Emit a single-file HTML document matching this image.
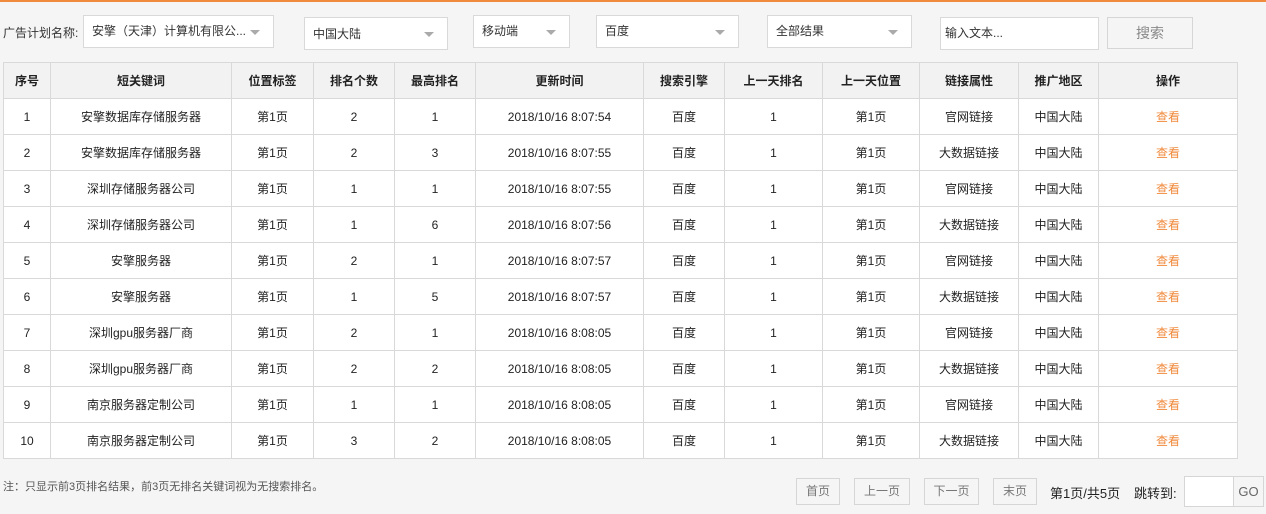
<!DOCTYPE html>
<html><head><meta charset="utf-8">
<style>
*{margin:0;padding:0;box-sizing:border-box}
body{width:1266px;height:514px;background:#f5f5f5;font-family:"Liberation Sans","Noto Sans CJK SC",sans-serif;font-size:12px;color:#222;position:relative;overflow:hidden}
.top{position:absolute;left:0;top:0;width:1266px;height:2px;background:#f08a3c}
.abs{position:absolute}
.sel{position:absolute;background:#fff;border:1px solid #d9d9d9;height:33px;line-height:31px;padding-left:8px;color:#333}
.sel.a:after{content:"";position:absolute;right:13px;top:14px;border-left:5px solid transparent;border-right:5px solid transparent;border-top:5px solid #aaa}
table{position:absolute;left:3px;top:62px;border-collapse:collapse;background:#fff;table-layout:fixed}
td,th{border:1px solid #d9d9d9;text-align:center;height:36px;font-size:12px;font-weight:normal;color:#222}
th{background:#f2f2f2;font-weight:bold}
td.o{color:#f08a3c}
.btn{position:absolute;top:478px;height:27px;line-height:25px;border:1px solid #d6d6d6;background:#f5f5f5;color:#777;text-align:center}
</style></head><body>
<div class="top"></div>
<div class="abs" style="left:3px;top:25px;line-height:16px;color:#333">广告计划名称:</div>
<div class="sel a" style="left:83px;top:15px;width:191px;">安擎（天津）计算机有限公...</div>
<div class="sel a" style="left:304px;top:17px;width:144px;line-height:33px">中国大陆</div>
<div class="sel a" style="left:473px;top:15px;width:97px">移动端</div>
<div class="sel a" style="left:596px;top:15px;width:143px">百度</div>
<div class="sel a" style="left:767px;top:15px;width:145px">全部结果</div>
<div class="sel" style="left:940px;top:17px;width:159px;padding-left:4px">输入文本...</div>
<div class="abs" style="left:1107px;top:17px;width:86px;height:32px;line-height:30px;border:1px solid #d6d6d6;text-align:center;color:#888;font-size:14px">搜索</div>
<table>
<colgroup><col style="width:47px"><col style="width:181px"><col style="width:82px"><col style="width:81px"><col style="width:81px"><col style="width:168px"><col style="width:81px"><col style="width:98px"><col style="width:97px"><col style="width:99px"><col style="width:80px"><col style="width:139px"></colgroup>
<tr><th>序号</th><th>短关键词</th><th>位置标签</th><th>排名个数</th><th>最高排名</th><th>更新时间</th><th>搜索引擎</th><th>上一天排名</th><th>上一天位置</th><th>链接属性</th><th>推广地区</th><th>操作</th></tr>
<tr><td>1</td><td>安擎数据库存储服务器</td><td>第1页</td><td>2</td><td>1</td><td>2018/10/16 8:07:54</td><td>百度</td><td>1</td><td>第1页</td><td>官网链接</td><td>中国大陆</td><td class="o">查看</td></tr>
<tr><td>2</td><td>安擎数据库存储服务器</td><td>第1页</td><td>2</td><td>3</td><td>2018/10/16 8:07:55</td><td>百度</td><td>1</td><td>第1页</td><td>大数据链接</td><td>中国大陆</td><td class="o">查看</td></tr>
<tr><td>3</td><td>深圳存储服务器公司</td><td>第1页</td><td>1</td><td>1</td><td>2018/10/16 8:07:55</td><td>百度</td><td>1</td><td>第1页</td><td>官网链接</td><td>中国大陆</td><td class="o">查看</td></tr>
<tr><td>4</td><td>深圳存储服务器公司</td><td>第1页</td><td>1</td><td>6</td><td>2018/10/16 8:07:56</td><td>百度</td><td>1</td><td>第1页</td><td>大数据链接</td><td>中国大陆</td><td class="o">查看</td></tr>
<tr><td>5</td><td>安擎服务器</td><td>第1页</td><td>2</td><td>1</td><td>2018/10/16 8:07:57</td><td>百度</td><td>1</td><td>第1页</td><td>官网链接</td><td>中国大陆</td><td class="o">查看</td></tr>
<tr><td>6</td><td>安擎服务器</td><td>第1页</td><td>1</td><td>5</td><td>2018/10/16 8:07:57</td><td>百度</td><td>1</td><td>第1页</td><td>大数据链接</td><td>中国大陆</td><td class="o">查看</td></tr>
<tr><td>7</td><td>深圳gpu服务器厂商</td><td>第1页</td><td>2</td><td>1</td><td>2018/10/16 8:08:05</td><td>百度</td><td>1</td><td>第1页</td><td>官网链接</td><td>中国大陆</td><td class="o">查看</td></tr>
<tr><td>8</td><td>深圳gpu服务器厂商</td><td>第1页</td><td>2</td><td>2</td><td>2018/10/16 8:08:05</td><td>百度</td><td>1</td><td>第1页</td><td>大数据链接</td><td>中国大陆</td><td class="o">查看</td></tr>
<tr><td>9</td><td>南京服务器定制公司</td><td>第1页</td><td>1</td><td>1</td><td>2018/10/16 8:08:05</td><td>百度</td><td>1</td><td>第1页</td><td>官网链接</td><td>中国大陆</td><td class="o">查看</td></tr>
<tr><td>10</td><td>南京服务器定制公司</td><td>第1页</td><td>3</td><td>2</td><td>2018/10/16 8:08:05</td><td>百度</td><td>1</td><td>第1页</td><td>大数据链接</td><td>中国大陆</td><td class="o">查看</td></tr>
</table>
<div class="abs" style="left:3px;top:478px;color:#555;font-size:11px">注：只显示前3页排名结果，前3页无排名关键词视为无搜索排名。</div>
<div class="btn" style="left:796px;width:44px">首页</div>
<div class="btn" style="left:854px;width:56px">上一页</div>
<div class="btn" style="left:924px;width:55px">下一页</div>
<div class="btn" style="left:993px;width:44px">末页</div>
<div class="abs" style="left:1050px;top:483px;font-size:13px">第1页/共5页</div>
<div class="abs" style="left:1134px;top:483px;font-size:13px">跳转到:</div>
<div class="abs" style="left:1184px;top:476px;width:50px;height:31px;background:#fff;border:1px solid #d6d6d6"></div>
<div class="abs" style="left:1233px;top:476px;width:31px;height:31px;border:1px solid #d6d6d6;line-height:29px;text-align:center;color:#666;font-size:13px">GO</div>
</body></html>
